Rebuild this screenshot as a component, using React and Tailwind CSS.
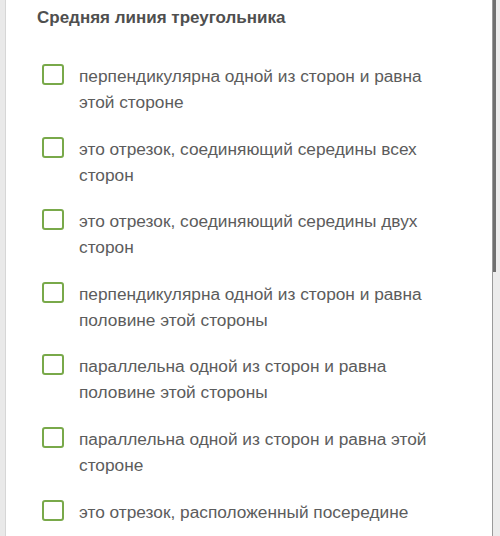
import React from 'react'

const answers = [
  'перпендикулярна одной из сторон и равна этой стороне',
  'это отрезок, соединяющий середины всех сторон',
  'это отрезок, соединяющий середины двух сторон',
  'перпендикулярна одной из сторон и равна половине этой стороны',
  'параллельна одной из сторон и равна половине этой стороны',
  'параллельна одной из сторон и равна этой стороне',
  'это отрезок, расположенный посередине',
]

const Option = ({ text }) => (
  <label className="flex items-start gap-[15px] pl-[36px]">
    <span className="mt-[1px] h-[21px] w-[22px] shrink-0 rounded-[3px] border-[2.5px] border-[#79a94a] bg-white" />
    <span className="w-[360px] text-[17.3px] leading-[26px] text-[#5c5c5c]">{text}</span>
  </label>
)

export default function App() {
  return (
    <div
      className="flex h-[536px] w-[500px] overflow-hidden bg-[#ebebeb]"
      style={{ fontFamily: '"Liberation Sans", Arial, sans-serif' }}
    >
      <div className="w-[6px] shrink-0 border-r border-[#d6d6d6] bg-[#e9e9e9]" />
      <div className="flex-1 bg-white">
        <h2 className="pl-[31px] pt-[8px] text-[17px] font-bold leading-[20px] text-[#4f4f4f]">
          Средняя линия треугольника
        </h2>
        <div className="mt-[35px] flex flex-col gap-[20.6px]">
          {answers.map((a) => (
            <Option key={a} text={a} />
          ))}
        </div>
      </div>
      <div className="flex w-[8px] shrink-0 border-l border-[#9a9a9a] bg-[#ececec]">
        <div className="h-[272px] w-[3px] bg-[#6f6f6f]" />
      </div>
    </div>
  )
}
